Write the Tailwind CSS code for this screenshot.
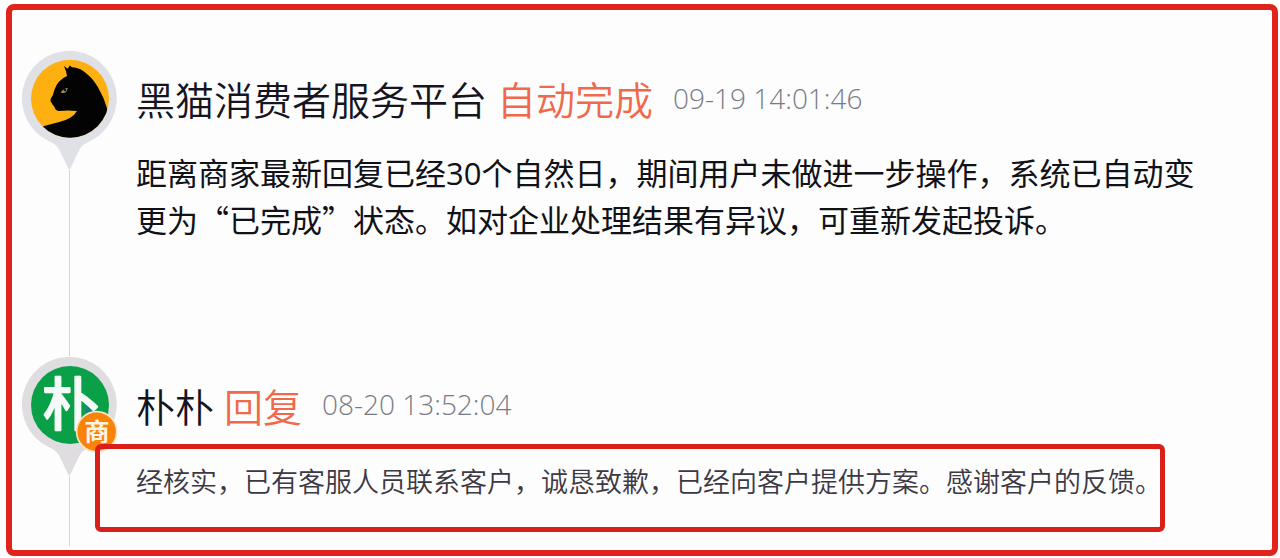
<!DOCTYPE html>
<html lang="zh-CN">
<head>
<meta charset="utf-8">
<meta name="viewport" content="width=device-width, initial-scale=1">
<title>投诉进度</title>
<script src="https://cdn.jsdelivr.net/npm/@tailwindcss/browser@4"></script>
</head>
<body class="bg-white font-['Open_Sans','Noto_Sans_CJK_SC',sans-serif] text-[#15141f]">
<main class="mt-1 mr-0.5 ml-1.5 rounded-lg border-6 border-[#e1241b] bg-[#fdfdfd] pt-10 pr-16 pb-1 pl-2.5">
  <ol>
    <li class="flex gap-[19px]">
      <div class="flex w-[95px] shrink-0 flex-col items-center">
        <svg class="h-[120px] w-[95px]" viewBox="66 60 285 360" role="img" aria-label="黑猫">
          <defs><clipPath id="disc"><circle cx="210" cy="206" r="117"/></clipPath></defs>
          <path fill="#e0e1e6" d="M208 62a143 143 0 0 1 61 272q-20 8-30 24l-29 60h-4l-29-60q-10-16-30-24A143 143 0 0 1 208 62Z"/>
          <circle cx="210" cy="206" r="117" fill="#fdb010"/>
          <g clip-path="url(#disc)">
            <path d="M192 108L203 116L210 106Q213 113 219 112Q243 115 260 131Q280 147 294 172Q312 202 322 238V330H120L130 289Q150 283 178 276Q218 266 231 243Q205 240 176 243Q165 240 163 230Q158 225 155 219Q149 212 153 205Q160 196 161 187Q168 162 180 152Q188 144 201 138Q199 123 192 108Z" fill="#030303"/>
            <path d="M182 187q7-11 21-14q-2 14-12 16q-6 1-9-2Z" fill="#9a8c62"/>
            <circle cx="195" cy="180" r="4" fill="#111"/>
          </g>
        </svg>
        <div class="w-px grow bg-[#d5d5d9]"></div>
      </div>
      <div class="min-w-0 grow pb-[113px]">
        <div class="flex h-[100px] items-center">
          <h2 class="text-[39px] font-[350]">黑猫消费者服务平台</h2>
          <span class="ml-2.5 text-[39px] font-[350] text-[#f0694a]">自动完成</span>
          <time class="ml-5 pb-1 text-[28px] font-light text-[#797b87]">09-19 14:01:46</time>
        </div>
        <p class="text-[31px] leading-[46px] text-[#111118]">距离商家最新回复已经30个自然日，期间用户未做进一步操作，系统已自动变更为<span class="font-['Noto_Sans_CJK_SC',sans-serif]">“已完成”</span>状态。如对企业处理结果有异议，可重新发起投诉。</p>
      </div>
    </li>
    <li class="flex gap-[19px]">
      <div class="flex w-[95px] shrink-0 flex-col items-center">
        <svg class="h-[120px] w-[95px]" viewBox="66 48 285 360" role="img" aria-label="朴朴商家">
          <path fill="#e0dde1" d="M208 50a143 143 0 0 1 61 272q-20 8-30 24l-29 60h-4l-29-60q-10-16-30-24A143 143 0 0 1 208 50Z"/>
          <circle cx="210" cy="195" r="117" fill="#0aa047"/>
          <path d="M257 190l26 28h-26Z" fill="#16848b"/>
          <text x="212" y="254" text-anchor="middle" font-size="170" font-weight="400" fill="#f4fbf6" stroke="#f4fbf6" stroke-width="7" stroke-linejoin="round">朴</text>
          <circle cx="290" cy="275" r="60" fill="#f98307" stroke="#f8e3c7" stroke-width="5"/>
          <text x="291" y="304" text-anchor="middle" font-size="76" font-weight="700" fill="#fff3e4">商</text>
        </svg>
        <div class="w-px grow bg-[#d5d5d9]"></div>
      </div>
      <div class="min-w-0 grow pb-3.5">
        <div class="flex h-[88px] items-center pt-3.5">
          <h2 class="text-[39px] font-[350]">朴朴</h2>
          <span class="ml-2.5 text-[39px] font-[350] text-[#f0694a]">回复</span>
          <time class="ml-5 pb-1.5 text-[28px] font-light text-[#797b87]">08-20 13:52:04</time>
        </div>
        <p class="relative mr-[43px] -ml-[41px] rounded-md border-5 border-[#d91f17] pt-2.5 pb-[22px] pl-9 text-[27px] leading-[46px] font-[350] text-[#3c3844] lg:whitespace-nowrap">经核实，已有客服人员联系客户，诚恳致歉，已经向客户提供方案。感谢客户的反馈。</p>
      </div>
    </li>
  </ol>
</main>
</body>
</html>
